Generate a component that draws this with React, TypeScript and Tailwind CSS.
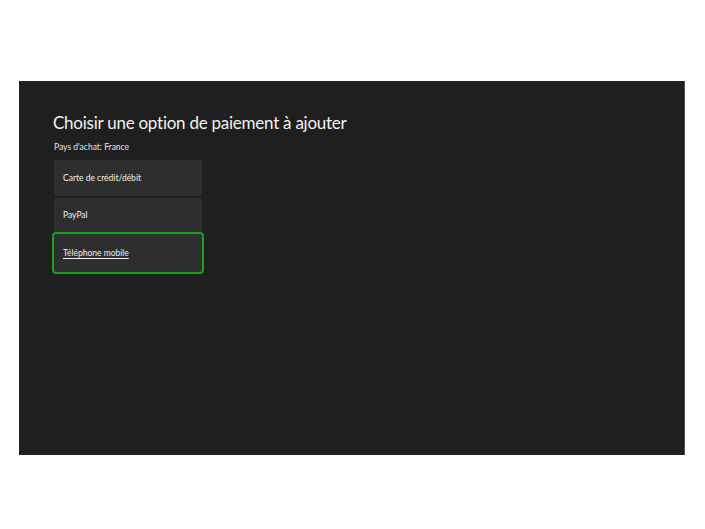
export default function App() {
  return (
    <div className="w-[705px] h-[529px] bg-white pt-[81px] pl-[19px]" style={{ fontFamily: 'Lato, "Open Sans", sans-serif' }}>
      <div className="w-[666px] h-[374px] bg-[#1f1f1f] border-r border-[#4a4a4a] pl-[34px] pt-[29px]">
        <h1 className="text-[17px] leading-[26px] text-[#f2f2f2] tracking-[-0.25px]">Choisir une option de paiement à ajouter</h1>
        <p className="text-[8.5px] leading-[12px] text-[#e6e6e6] mt-[5px] ml-[1px]">Pays d'achat: France</p>
        <div className="flex flex-col gap-[2px] mt-[7px] ml-[1px] w-[148px]">
          <div className="h-[36px] bg-[#2e2e2e] rounded-[2px] flex items-center pl-[9px] text-[8.5px] text-[#f0f0f0]">Carte de crédit/débit</div>
          <div className="h-[34px] bg-[#2e2e2e] rounded-[2px] flex items-center pl-[9px] text-[8.5px] text-[#f0f0f0]">PayPal</div>
          <div className="h-[42px] w-[152px] -ml-[2px] -mt-[2px] border-2 border-[#16a116] rounded-[4px] bg-[#2e2e2e] flex items-center pl-[9px] text-[8.5px] text-[#f0f0f0]">
            <span className="underline underline-offset-2">Téléphone mobile</span>
          </div>
        </div>
      </div>
    </div>
  );
}
